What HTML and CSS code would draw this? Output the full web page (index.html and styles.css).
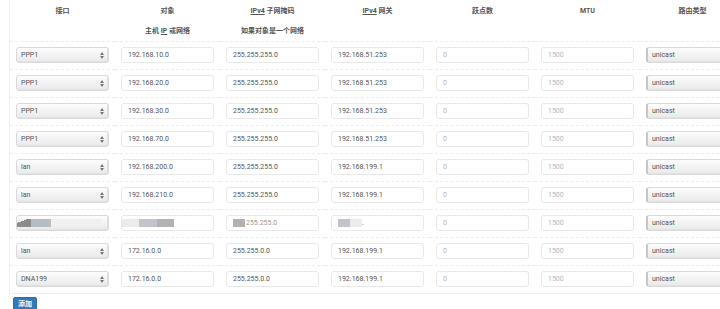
FILE: index.html
```html
<!DOCTYPE html>
<html lang="zh">
<head>
  <meta charset="UTF-8" />
  <meta name="viewport" content="width=device-width, initial-scale=1.0" />
  <title>静态路由</title>
  <link rel="stylesheet" href="styles.css">
</head>
<body>
  <div class="route-box">
    <table class="route-table">
      <thead>
        <tr class="head-main">
          <th>接口</th>
          <th>对象</th>
          <th><abbr>IPv4</abbr> 子网掩码</th>
          <th><abbr>IPv4</abbr> 网关</th>
          <th>跃点数</th>
          <th>MTU</th>
          <th>路由类型</th>
        </tr>
        <tr class="head-sub">
          <th></th>
          <th>主机 <abbr>IP</abbr> 或网络</th>
          <th>如果对象是一个网络</th>
          <th></th>
          <th></th>
          <th></th>
          <th></th>
        </tr>
      </thead>
      <tbody>
        <tr>
          <td><div class="select"><span>PPP1</span><svg class="arrow" width="4" height="7" viewBox="0 0 4 7"><path d="M0 3 L2 0 L4 3 Z M0 4 L2 7 L4 4 Z" fill="#777"/></svg></div></td>
          <td><div class="field">192.168.10.0</div></td>
          <td><div class="field">255.255.255.0</div></td>
          <td><div class="field">192.168.51.253</div></td>
          <td><div class="field muted">0</div></td>
          <td><div class="field muted">1500</div></td>
          <td><div class="select route"><span>unicast</span></div></td>
        </tr>
        <tr>
          <td><div class="select"><span>PPP1</span><svg class="arrow" width="4" height="7" viewBox="0 0 4 7"><path d="M0 3 L2 0 L4 3 Z M0 4 L2 7 L4 4 Z" fill="#777"/></svg></div></td>
          <td><div class="field">192.168.20.0</div></td>
          <td><div class="field">255.255.255.0</div></td>
          <td><div class="field">192.168.51.253</div></td>
          <td><div class="field muted">0</div></td>
          <td><div class="field muted">1500</div></td>
          <td><div class="select route"><span>unicast</span></div></td>
        </tr>
        <tr>
          <td><div class="select"><span>PPP1</span><svg class="arrow" width="4" height="7" viewBox="0 0 4 7"><path d="M0 3 L2 0 L4 3 Z M0 4 L2 7 L4 4 Z" fill="#777"/></svg></div></td>
          <td><div class="field">192.168.30.0</div></td>
          <td><div class="field">255.255.255.0</div></td>
          <td><div class="field">192.168.51.253</div></td>
          <td><div class="field muted">0</div></td>
          <td><div class="field muted">1500</div></td>
          <td><div class="select route"><span>unicast</span></div></td>
        </tr>
        <tr>
          <td><div class="select"><span>PPP1</span><svg class="arrow" width="4" height="7" viewBox="0 0 4 7"><path d="M0 3 L2 0 L4 3 Z M0 4 L2 7 L4 4 Z" fill="#777"/></svg></div></td>
          <td><div class="field">192.168.70.0</div></td>
          <td><div class="field">255.255.255.0</div></td>
          <td><div class="field">192.168.51.253</div></td>
          <td><div class="field muted">0</div></td>
          <td><div class="field muted">1500</div></td>
          <td><div class="select route"><span>unicast</span></div></td>
        </tr>
        <tr>
          <td><div class="select"><span>lan</span><svg class="arrow" width="4" height="7" viewBox="0 0 4 7"><path d="M0 3 L2 0 L4 3 Z M0 4 L2 7 L4 4 Z" fill="#777"/></svg></div></td>
          <td><div class="field">192.168.200.0</div></td>
          <td><div class="field">255.255.255.0</div></td>
          <td><div class="field">192.168.199.1</div></td>
          <td><div class="field muted">0</div></td>
          <td><div class="field muted">1500</div></td>
          <td><div class="select route"><span>unicast</span></div></td>
        </tr>
        <tr>
          <td><div class="select"><span>lan</span><svg class="arrow" width="4" height="7" viewBox="0 0 4 7"><path d="M0 3 L2 0 L4 3 Z M0 4 L2 7 L4 4 Z" fill="#777"/></svg></div></td>
          <td><div class="field">192.168.210.0</div></td>
          <td><div class="field">255.255.255.0</div></td>
          <td><div class="field">192.168.199.1</div></td>
          <td><div class="field muted">0</div></td>
          <td><div class="field muted">1500</div></td>
          <td><div class="select route"><span>unicast</span></div></td>
        </tr>
        <!-- redacted row -->
        <tr class="redacted">
          <td><div class="select blurred"><span class="blot blot-dark"></span><span class="blot blot-blue"></span><span class="blot blot-pale"></span></div></td>
          <td><div class="field blank"><span class="blot blot-light"></span><span class="blot blot-mid"></span><span class="blot blot-grey"></span></div></td>
          <td><div class="field"><span class="blot blot-grey short"></span><span class="ghost">255.255.0</span></div></td>
          <td><div class="field"><span class="blot blot-mid short"></span><span class="blot blot-light short"></span>.</div></td>
          <td><div class="field muted">0</div></td>
          <td><div class="field muted">1500</div></td>
          <td><div class="select route"><span>unicast</span></div></td>
        </tr>
        <tr>
          <td><div class="select"><span>lan</span><svg class="arrow" width="4" height="7" viewBox="0 0 4 7"><path d="M0 3 L2 0 L4 3 Z M0 4 L2 7 L4 4 Z" fill="#777"/></svg></div></td>
          <td><div class="field">172.16.0.0</div></td>
          <td><div class="field">255.255.0.0</div></td>
          <td><div class="field">192.168.199.1</div></td>
          <td><div class="field muted">0</div></td>
          <td><div class="field muted">1500</div></td>
          <td><div class="select route"><span>unicast</span></div></td>
        </tr>
        <tr>
          <td><div class="select"><span>DNA199</span><svg class="arrow" width="4" height="7" viewBox="0 0 4 7"><path d="M0 3 L2 0 L4 3 Z M0 4 L2 7 L4 4 Z" fill="#777"/></svg></div></td>
          <td><div class="field">172.16.0.0</div></td>
          <td><div class="field">255.255.0.0</div></td>
          <td><div class="field">192.168.199.1</div></td>
          <td><div class="field muted">0</div></td>
          <td><div class="field muted">1500</div></td>
          <td><div class="select route"><span>unicast</span></div></td>
        </tr>
      </tbody>
    </table>
  </div>
  <button type="button" class="add-btn">添加</button>
</body>
</html>
```
FILE: styles.css
```css
body {
  margin: 0;
  font-family: Roboto, "Noto Sans CJK SC", sans-serif;
  font-size: 7px;
  color: #555;
  background: #fff;
  overflow: hidden;
}

.route-box {
  margin-left: 9px;
  border-left: 1px solid #efefef;
  border-bottom: 1px solid #efefef;
  width: 735px;
}

.route-table {
  border-collapse: collapse;
  table-layout: fixed;
  width: 735px;
}

.route-table th {
  width: 105px;
  font-weight: bold;
  color: #555;
  text-align: center;
  padding: 0;
  line-height: 9px;
}

.head-main th {
  height: 19px;
  padding-top: 2px;
  vertical-align: middle;
}

.head-sub th {
  height: 20px;
  vertical-align: middle;
}

thead {
  border-bottom: 1px dashed #ececec;
}

abbr {
  text-decoration: underline;
}

.route-table td {
  padding: 5px 6px 6px;
  height: 16px;
}

.route-table tbody tr {
  border-bottom: 1px dashed #ececec;
}

.route-table tbody tr:last-child {
  border-bottom: none;
}

.field,
.select {
  box-sizing: border-box;
  height: 16px;
  display: flex;
  align-items: center;
  border-radius: 3px;
  padding-left: 6px;
  white-space: nowrap;
  overflow: hidden;
}

.field {
  border: 1px solid #e8e8e8;
  background: #fff;
}

.muted {
  color: #b5b5b5;
}

.select {
  border: 1px solid #d9d9d9;
  background: linear-gradient(#fdfdfd, #e9e9e9);
  box-shadow: inset -1px -1px 0 #e2e2e2;
  justify-content: space-between;
  padding-left: 4px;
  padding-right: 4px;
}

.select .arrow {
  flex: none;
}

.route {
  border-left: 2px solid #c6c6c6;
  width: 105px;
}

.blurred {
  justify-content: flex-start;
  padding-left: 0;
  padding-right: 0;
}

.blot {
  display: inline-block;
  height: 8px;
  flex: none;
}

.blot-dark {
  width: 14px;
  background: linear-gradient(160deg, #eee 0 30%, #8c8c8c 30%);
}

.blot-blue {
  width: 20px;
  background: #b4bcc4;
}

.blot-pale {
  width: 50px;
  background: #f0f0f0;
}

.blank {
  padding-left: 0;
}

.blot-light {
  width: 17px;
  background: #ececec;
}

.blot-mid {
  width: 18px;
  background: #c3c3cb;
}

.blot-grey {
  width: 17px;
  background: #b2b2b2;
}

.blot.short {
  width: 12px;
}

.ghost {
  color: #999;
  margin-left: 1px;
}

.add-btn {
  display: block;
  margin: 3px 0 0 13px;
  padding: 0;
  width: 24px;
  height: 13px;
  line-height: 11px;
  border: 1px solid #2e6da4;
  border-radius: 2px;
  background: #337ab7;
  color: #fff;
  font-family: "Noto Sans CJK SC", sans-serif;
  font-size: 7px;
  font-weight: bold;
  cursor: pointer;
}
```
